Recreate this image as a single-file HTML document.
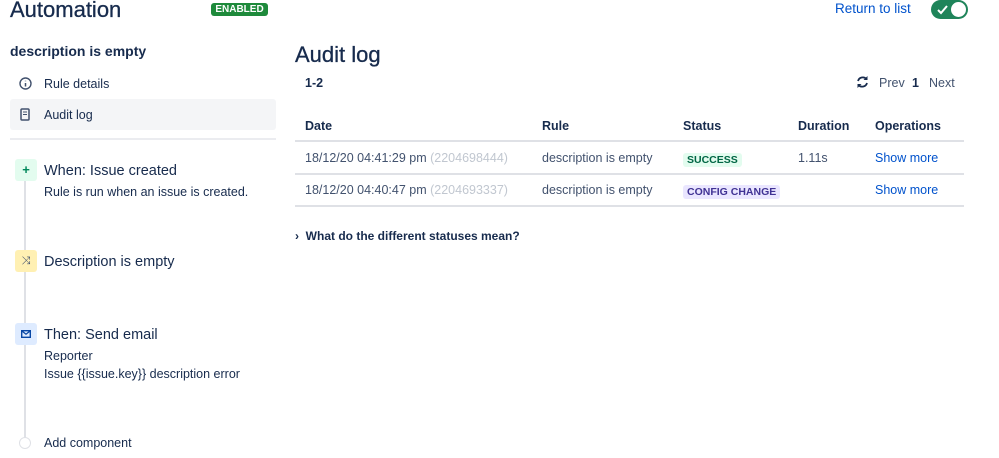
<!DOCTYPE html>
<html><head><meta charset="utf-8"><style>
body{margin:0;width:999px;height:458px;background:#fff;font-family:"Liberation Sans",sans-serif;color:#172b4d;position:relative;overflow:hidden}
.a{position:absolute;white-space:nowrap}
.t13{font-size:12.5px}
.hr{position:absolute;height:2px;background:#dfe1e6;left:295px;width:669px}
.ib{position:absolute;left:15px;width:22px;height:22px;border-radius:3px;text-align:center;line-height:22px;font-size:13px}
.lz{font-size:10.5px;font-weight:bold;padding:1px 4px;border-radius:3px}
a{color:#0052cc;text-decoration:none}
</style></head><body>
<div class="a" style="left:10px;top:-3px;font-size:22px;-webkit-text-stroke:0.3px #172b4d">Automation</div>
<div class="a" style="left:211px;top:3px;width:57px;height:13px;background:#1e8a3b;border-radius:3px;color:#fff;font-size:10px;font-weight:bold;text-align:center;line-height:13px">ENABLED</div>
<div class="a" style="left:835px;top:1px;font-size:13.5px;color:#0052cc">Return to list</div>
<div class="a" style="left:931px;top:0px;width:37px;height:19px;background:#1f845a;border-radius:10px">
 <svg class="a" style="left:6px;top:4px" width="12" height="11"><path d="M1 6l3 3 6-7" stroke="#fff" stroke-width="2" fill="none"/></svg>
 <div class="a" style="left:20px;top:2px;width:15px;height:15px;border-radius:50%;background:#fff"></div></div>

<div class="a" style="left:10px;top:43px;font-size:14px;font-weight:bold;color:#172b4d">description is empty</div>
<svg class="a" style="left:19px;top:77px" width="13" height="13"><circle cx="6.5" cy="6.5" r="5.5" stroke="#42526e" stroke-width="1.4" fill="none"/><path d="M6.5 6v3.5M6.5 3.8v.4" stroke="#42526e" stroke-width="1.5"/></svg>
<div class="a t13" style="left:44px;top:77px">Rule details</div>
<div class="a" style="left:10px;top:99px;width:266px;height:31px;background:#f4f5f7;border-radius:3px"></div>
<svg class="a" style="left:20px;top:108px" width="10" height="13"><rect x="1" y="1" width="8" height="11" rx="1" stroke="#42526e" stroke-width="1.5" fill="none"/><path d="M3 4h4M3 6.5h4" stroke="#42526e"/></svg>
<div class="a t13" style="left:44px;top:108px">Audit log</div>
<div class="a" style="left:10px;top:138px;width:266px;height:2px;background:#ebecf0"></div>

<div class="a" style="left:24px;top:165px;width:2px;height:275px;background:#dfe1e6"></div>
<div class="ib" style="top:159px;background:#e3fcef;color:#00875a;font-weight:bold">+</div>
<div class="a" style="left:44px;top:163px;font-size:14.5px">When: Issue created</div>
<div class="a t13" style="left:44px;top:185px">Rule is run when an issue is created.</div>
<div class="ib" style="top:250px;background:#fff0b3;color:#42526e;font-size:11px">⤨</div>
<div class="a" style="left:44px;top:254px;font-size:14.5px">Description is empty</div>
<div class="ib" style="top:323px;background:#deebff"><svg style="margin-top:7px" width="10" height="8"><rect x=".7" y=".7" width="8.6" height="6.6" stroke="#0747a6" stroke-width="1.4" fill="none"/><path d="M1 1l4 3.2 4-3.2" stroke="#0747a6" stroke-width="1.3" fill="none"/></svg></div>
<div class="a" style="left:44px;top:327px;font-size:14.5px">Then: Send email</div>
<div class="a t13" style="left:44px;top:349px">Reporter</div>
<div class="a t13" style="left:44px;top:367px">Issue {{issue.key}} description error</div>
<div class="a" style="left:19px;top:437px;width:10px;height:10px;border-radius:50%;border:1px solid #dfe1e6;background:#fff"></div>
<div class="a t13" style="left:44px;top:436px">Add component</div>

<div class="a" style="left:295px;top:42px;font-size:22px;-webkit-text-stroke:0.3px #172b4d">Audit log</div>
<div class="a t13" style="left:305px;top:76px;font-weight:bold">1-2</div>
<svg class="a" style="left:856px;top:75px" width="13" height="14"><path d="M10.5 4A5 5 0 0 0 2 6M2.5 10A5 5 0 0 0 11 8" stroke="#172b4d" stroke-width="1.8" fill="none"/><path d="M11.5 1v4h-4zM1.5 13V9h4z" fill="#172b4d"/></svg>
<div class="a t13" style="left:879px;top:76px;color:#42526e">Prev</div>
<div class="a t13" style="left:912px;top:76px;font-weight:bold">1</div>
<div class="a t13" style="left:929px;top:76px;color:#42526e">Next</div>

<div class="a t13" style="left:305px;top:119px;font-weight:bold">Date</div>
<div class="a t13" style="left:542px;top:119px;font-weight:bold">Rule</div>
<div class="a t13" style="left:683px;top:119px;font-weight:bold">Status</div>
<div class="a t13" style="left:798px;top:119px;font-weight:bold">Duration</div>
<div class="a t13" style="left:875px;top:119px;font-weight:bold">Operations</div>
<div class="hr" style="top:140px"></div>
<div class="a t13" style="left:305px;top:151px;color:#42526e">18/12/20 04:41:29 pm <span style="color:#c1c7d0">(2204698444)</span></div>
<div class="a t13" style="left:542px;top:151px;color:#42526e">description is empty</div>
<div class="a" style="left:683px;top:150px"><span class="lz" style="background:#e3fcef;color:#006644">SUCCESS</span></div>
<div class="a t13" style="left:798px;top:151px;color:#42526e">1.11s</div>
<div class="a t13" style="left:875px;top:151px"><a>Show more</a></div>
<div class="hr" style="top:173px"></div>
<div class="a t13" style="left:305px;top:183px;color:#42526e">18/12/20 04:40:47 pm <span style="color:#c1c7d0">(2204693337)</span></div>
<div class="a t13" style="left:542px;top:183px;color:#42526e">description is empty</div>
<div class="a" style="left:683px;top:182px"><span class="lz" style="background:#eae6ff;color:#403294">CONFIG CHANGE</span></div>
<div class="a t13" style="left:875px;top:183px"><a>Show more</a></div>
<div class="hr" style="top:205px"></div>
<div class="a" style="left:295px;top:229px;font-size:12px;font-weight:bold">›&nbsp; What do the different statuses mean?</div>
</body></html>
